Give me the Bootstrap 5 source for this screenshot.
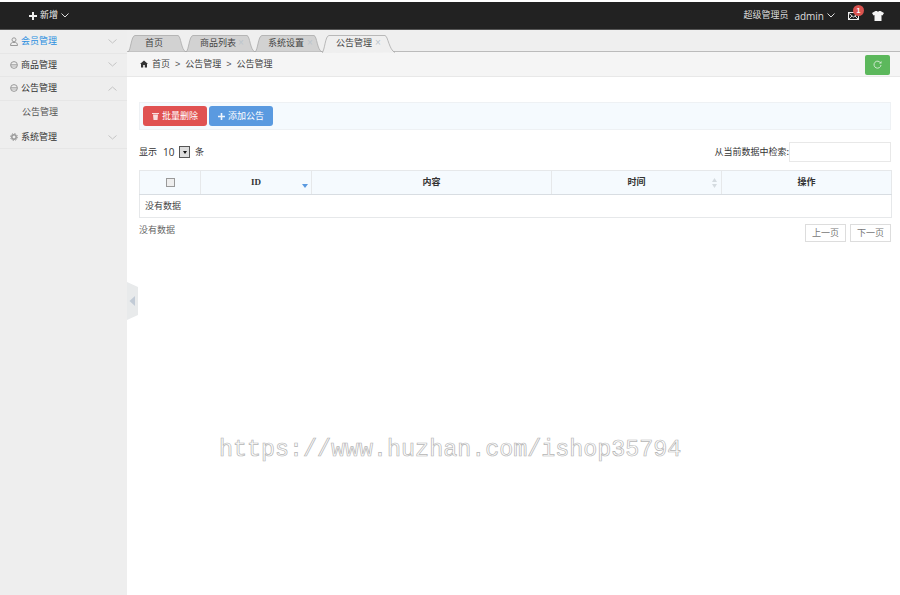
<!DOCTYPE html>
<html lang="zh">
<head>
<meta charset="utf-8">
<title>公告管理</title>
<link href="https://cdn.jsdelivr.net/npm/bootstrap@5.3.0/dist/css/bootstrap.min.css" rel="stylesheet">
<style>
html,body{height:100%;}
body{font-family:"Noto Sans CJK SC","Liberation Sans",sans-serif;font-size:9px;color:#333;background:#fff;overflow:hidden;line-height:1.4;}
.shell{height:595px;width:900px;position:relative;}
.topgap{height:2px;background:#fff;}
.topbar{height:28px;background:#222;border-bottom:1px solid #555;color:#ddd;padding:0 16px 0 29px;}
.topbar svg{display:block;}
.addbtn{color:#eee;gap:3px;}
.admin-name{font-family:"Open Sans",sans-serif;font-size:10px;margin-left:6px;margin-right:3px;}
.mail-wrap{position:relative;margin-left:13px;margin-right:13px;}
.cnt{position:absolute;top:-7px;left:5px;width:11px;height:11px;border-radius:50%;background:#d9534f;color:#fff;font:bold 7px/11px "Liberation Sans",sans-serif;text-align:center;}
.mainrow{height:565px;}
.sidebar{width:127px;background:#eee;flex:none;}
.sb-item{height:23.6px;border-bottom:1px solid #e6e6e6;padding:0 10px 0 10px;color:#333;gap:3px;}
.sb-item.on{color:#2a8ee0;}
.sb-sub{height:25px;padding-left:22px;color:#555;border-bottom:1px solid transparent;}
.sb-item .chev{margin-left:auto;}
.workarea{flex:1;position:relative;min-width:0;}
.tabsrow{height:22px;background:#efefef;border-bottom:1px solid #bbb;padding:5px 0 0 1px;}
.tabx{height:17px;position:relative;color:#444;flex:none;padding-bottom:1px;}
.tabx svg{position:absolute;left:0;top:0;}
.tabx .lbl{position:relative;}
.tabx .cl{position:absolute;top:2px;color:#bcc5cc;font:10px/12px "Liberation Sans",sans-serif;}
.crumbbar{height:25px;background:#f5f5f5;border-bottom:1px solid #e8e8e8;padding:0 10px 0 13px;color:#444;}
.crumbbar .sp{margin:0 5px;color:#555;font-family:"Liberation Sans",sans-serif;}
.refresh{width:25px;height:20px;background:#5cb85c;border-radius:2px;margin-top:1px;}
.pagebody{padding:25px 9px 0 12px;}
.toolbar{height:28px;background:#f5fafe;border:1px solid #eef1f4;padding:0 3px;gap:2px;}
.tbtn{height:20px;width:64px;border-radius:3px;color:#fff;gap:3px;border:0;padding:0;font-size:9px;}
.tbtn.red{background:#e05252;}
.tbtn.blue{background:#5a9ae0;}
.filterrow{margin-top:12px;height:20px;}
.lenbox{display:inline-flex;align-items:center;height:14px;margin:0 3px 0 2px;width:33px;background:#fff;position:relative;padding-left:4px;font:10px "Open Sans",sans-serif;}
.lenarrow{position:absolute;right:2px;top:1px;width:11px;height:12px;background:#ddd;border:1px solid #555;display:flex;align-items:center;justify-content:center;}
.lenarrow i{display:block;border:2.5px solid transparent;border-top:3px solid #111;border-bottom:0;}
.searchinput{width:102px;height:20px;border:1px solid #e8e8e8;background:#fff;padding:0;}
.grid{margin:8px 0 0;width:752px;table-layout:fixed;border-collapse:collapse;--bs-table-border-color:#e6e8ea;font-size:9px;}
.grid>*>tr>*{border:1px solid #e6e8ea;padding:0;vertical-align:middle;}
.grid thead th{height:24px;background:#f5fafe;text-align:center;font-weight:700;color:#333;position:relative;border-bottom:1px solid #d8dde2;}
.grid tbody td{height:23px;padding-left:5px;color:#444;}
.idtxt{font-family:"Liberation Serif",serif;font-size:9px;}
.chk{display:inline-block;width:9px;height:9px;border:1px solid #999;background:#eee;vertical-align:middle;}
.sort{position:absolute;right:3px;top:50%;}
.pager{margin-top:6px;color:#666;}
.pbtn{height:18px;width:41px;border:1px solid #ddd;background:#fff;color:#777;font-size:9px;padding:0;border-radius:0;}
.pbtns{gap:4px;}
.fold{position:absolute;left:0;top:252px;}
.wmark{position:absolute;left:219px;top:432px;font:23.35px/36px "Liberation Mono",monospace;color:#fff;-webkit-text-stroke:.7px #b5b5b5;white-space:nowrap;letter-spacing:0;}
</style>
</head>
<body>
<div class="shell">
  <div class="topgap"></div>
  <div class="topbar d-flex align-items-center justify-content-between">
    <div class="addbtn d-flex align-items-center">
      <svg width="8" height="8" viewBox="0 0 8 8"><path d="M3 0h2v3h3v2H5v3H3V5H0V3h3z" fill="#eee"/></svg>
      <span>新增</span>
      <svg width="8" height="5" viewBox="0 0 8 5"><path d="M.5.5 4 4 7.500.5" fill="none" stroke="#ddd"/></svg>
    </div>
    <div class="d-flex align-items-center">
      <span>超级管理员</span>
      <span class="admin-name">admin</span>
      <svg width="8" height="5" viewBox="0 0 8 5"><path d="M.5.500 4 4 7.500.5" fill="none" stroke="#ddd"/></svg>
      <span class="mail-wrap">
        <svg width="11" height="8" viewBox="0 0 11 8"><rect x=".5" y=".5" width="10" height="7" fill="none" stroke="#eee"/><path d="M.5 1 5.500 5 10.500 1M.5 7.500 4 4M10.500 7.500 7 4" fill="none" stroke="#eee" stroke-width=".9"/></svg>
        <span class="cnt">1</span>
      </span>
      <svg width="12" height="10" viewBox="0 0 12 10"><path d="M3.500 0h1.500c.3 1 1.700 1 2 0h1.500L12 2 10.500 4.500 9.500 4v6h-7V4l-1 .5L0 2z" fill="#f4f4f4"/></svg>
    </div>
  </div>
  <div class="mainrow d-flex">
    <div class="sidebar">
      <div class="sb-item on d-flex align-items-center">
        <svg width="8" height="9" viewBox="0 0 8 9"><circle cx="4" cy="2.800" r="2" fill="none" stroke="#999"/><path d="M.5 8.500c0-2.500 1.500-3 2-3h3c.5 0 2 .5 2 3z" fill="none" stroke="#999"/></svg>
        <span>会员管理</span>
        <svg class="chev" width="9" height="5" viewBox="0 0 9 5"><path d="M.5.500 4.500 4 8.500.5" fill="none" stroke="#c4c4c4"/></svg>
      </div>
      <div class="sb-item d-flex align-items-center">
        <svg width="8" height="8" viewBox="0 0 8 8"><circle cx="4" cy="4" r="3.400" fill="none" stroke="#999"/><path d="M1 3.500h6M1 5h6" stroke="#999" stroke-width=".7"/></svg>
        <span>商品管理</span>
        <svg class="chev" width="9" height="5" viewBox="0 0 9 5"><path d="M.5.500 4.500 4 8.500.5" fill="none" stroke="#c4c4c4"/></svg>
      </div>
      <div class="sb-item d-flex align-items-center">
        <svg width="8" height="8" viewBox="0 0 8 8"><circle cx="4" cy="4" r="3.400" fill="none" stroke="#999"/><path d="M1 3.500h6M1 5h6" stroke="#999" stroke-width=".7"/></svg>
        <span>公告管理</span>
        <svg class="chev" width="9" height="5" viewBox="0 0 9 5"><path d="M.5 4.500 4.500 1 8.500 4.500" fill="none" stroke="#c4c4c4"/></svg>
      </div>
      <div class="sb-sub d-flex align-items-center">公告管理</div>
      <div class="sb-item d-flex align-items-center">
        <svg width="8" height="8" viewBox="0 0 8 8"><circle cx="4" cy="4" r="2.200" fill="none" stroke="#999" stroke-width="1.500"/><circle cx="4" cy="4" r="3.500" fill="none" stroke="#999" stroke-width="1" stroke-dasharray="1.300 1.450"/></svg>
        <span>系统管理</span>
        <svg class="chev" width="9" height="5" viewBox="0 0 9 5"><path d="M.5.500 4.500 4 8.500.5" fill="none" stroke="#c4c4c4"/></svg>
      </div>
    </div>
    <div class="workarea">
      <div class="tabsrow d-flex">
        <div class="tabx d-flex align-items-center" style="width:58px;padding-left:17px">
          <svg width="58" height="17" viewBox="0 0 58 17"><path d="M0 17C3 15 3 1 7 .5H50C53 1 53 15 58 17z" fill="#d2d2d2" stroke="#aaa" stroke-width=".8"/></svg>
          <span class="lbl">首页</span>
        </div>
        <div class="tabx d-flex align-items-center" style="width:69px;padding-left:14px">
          <svg width="69" height="17" viewBox="0 0 69 17"><path d="M0 17C3 15 3 1 7 .5H61C64 1 64 15 69 17z" fill="#d2d2d2" stroke="#aaa" stroke-width=".8"/></svg>
          <span class="lbl">商品列表</span><span class="cl" style="left:52px">×</span>
        </div>
        <div class="tabx d-flex align-items-center" style="width:67px;padding-left:13px">
          <svg width="67" height="17" viewBox="0 0 67 17"><path d="M0 17C3 15 3 1 7 .5H59C62 1 62 15 67 17z" fill="#d2d2d2" stroke="#aaa" stroke-width=".8"/></svg>
          <span class="lbl">系统设置</span><span class="cl" style="left:52px">×</span>
        </div>
        <div class="tabx d-flex align-items-center" style="width:73px;padding-left:14px">
          <svg width="73" height="18" viewBox="0 0 73 18"><path d="M0 18C3 15 3 1 7 .5H63C66 1 67 15 73 17.500" fill="#efefef" stroke="#aaa" stroke-width=".8"/></svg>
          <span class="lbl">公告管理</span><span class="cl" style="left:53px">×</span>
        </div>
      </div>
      <div class="crumbbar d-flex align-items-center justify-content-between">
        <div class="d-flex align-items-center">
          <svg class="me-1" width="8" height="8" viewBox="0 0 8 8"><path d="M4 .5 0 4h1v3.500h2.200V5h1.600v2.500H7V4h1z" fill="#333"/></svg>
          <span>首页</span><span class="sp">&gt;</span><span>公告管理</span><span class="sp">&gt;</span><span>公告管理</span>
        </div>
        <div class="refresh d-flex align-items-center justify-content-center">
          <svg width="9" height="9" viewBox="0 0 9 9"><path d="M7.600 3A3.500 3.500 0 1 0 8 5" fill="none" stroke="#cfe9cf"/><path d="M8.500 1v2.500H6z" fill="#cfe9cf"/></svg>
        </div>
      </div>
      <div class="pagebody">
        <div class="toolbar d-flex align-items-center">
          <button class="tbtn red d-flex align-items-center justify-content-center" type="button">
            <svg width="7" height="8" viewBox="0 0 7 8"><path d="M0 1h7v1H0zM1 2.500h5L5.500 8h-4z" fill="#f8dddd"/></svg>
            <span>批量删除</span>
          </button>
          <button class="tbtn blue d-flex align-items-center justify-content-center" type="button">
            <svg width="7" height="7" viewBox="0 0 7 7"><path d="M2.700 0h1.600v2.700H7v1.600H4.300V7H2.700V4.300H0V2.700h2.700z" fill="#eef5fd"/></svg>
            <span>添加公告</span>
          </button>
        </div>
        <div class="filterrow d-flex align-items-center justify-content-between">
          <div class="d-flex align-items-center">
            <span>显示</span>
            <span class="lenbox">10<span class="lenarrow"><i></i></span></span>
            <span>条</span>
          </div>
          <div class="d-flex align-items-center">
            <span>从当前数据中检索:</span>
            <input class="searchinput" type="text" aria-label="检索">
          </div>
        </div>
        <table class="grid">
          <colgroup><col style="width:61px"><col style="width:111px"><col style="width:240px"><col style="width:170px"><col style="width:170px"></colgroup>
          <thead>
            <tr>
              <th><span class="chk"></span></th>
              <th><span class="idtxt">ID</span><svg class="sort" style="margin-top:1px" width="6" height="4" viewBox="0 0 6 4"><path d="M0 0h6L3 4z" fill="#5a9ae0"/></svg></th>
              <th>内容</th>
              <th>时间<svg class="sort" style="margin-top:-5px;right:4px" width="5" height="10" viewBox="0 0 5 10"><path d="M2.500 0 5 4H0zM0 6h5L2.500 10z" fill="#d4dbe0"/></svg></th>
              <th>操作</th>
            </tr>
          </thead>
          <tbody><tr><td colspan="5">没有数据</td></tr></tbody>
        </table>
        <div class="pager d-flex justify-content-between align-items-start">
          <span>没有数据</span>
          <div class="pbtns d-flex">
            <button class="pbtn" type="button">上一页</button>
            <button class="pbtn" type="button">下一页</button>
          </div>
        </div>
      </div>
      <svg class="fold" width="11" height="38" viewBox="0 0 11 38"><path d="M0 0 11 5V33L0 38z" fill="#e8eaeb"/><path d="M8 14V24L2.500 19z" fill="#c2cbd6"/></svg>
    </div>
  </div>
  <div class="wmark">https://www.huzhan.com/ishop35794</div>
</div>
<script src="https://cdn.jsdelivr.net/npm/bootstrap@5.3.0/dist/js/bootstrap.bundle.min.js"></script>
</body>
</html>
